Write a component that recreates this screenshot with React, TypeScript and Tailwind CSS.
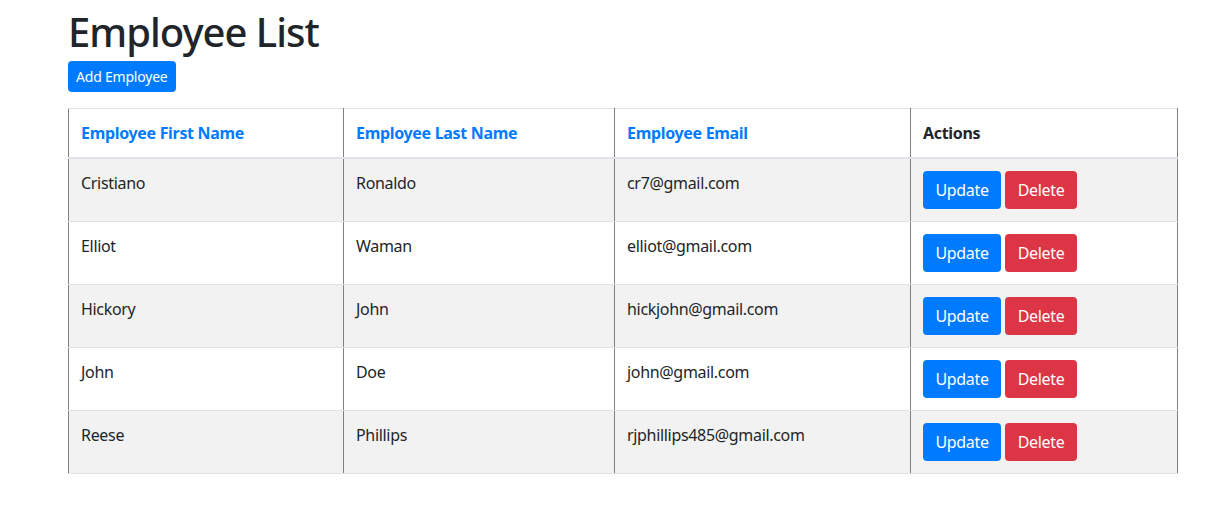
import React from 'react';

interface Employee {
  id: number;
  firstName: string;
  lastName: string;
  email: string;
}

const employees: Employee[] = [
  { id: 1, firstName: 'Cristiano', lastName: 'Ronaldo', email: 'cr7@gmail.com' },
  { id: 2, firstName: 'Elliot', lastName: 'Waman', email: 'elliot@gmail.com' },
  { id: 3, firstName: 'Hickory', lastName: 'John', email: 'hickjohn@gmail.com' },
  { id: 4, firstName: 'John', lastName: 'Doe', email: 'john@gmail.com' },
  { id: 5, firstName: 'Reese', lastName: 'Phillips', email: 'rjphillips485@gmail.com' },
];

const cell = 'px-3 pt-3 pb-3 align-top border-x border-x-[#808080] border-y border-y-[#dee2e6]';

const App: React.FC = () => {
  return (
    <div className="min-h-[522px] bg-white text-[#212529] font-['Noto_Sans','Open_Sans',sans-serif]">
      <div className="ml-[68px] w-[1110px]">
        <h1 className="pt-[8px] mb-[5px] text-[40px] leading-[48px] font-medium tracking-[-0.025em]">Employee List</h1>
        <button className="h-[31px] px-2 rounded bg-[#007bff] text-white text-[14px] leading-[21px] tracking-[-0.015em]">
          Add Employee
        </button>
        <table className="mt-4 w-full border-collapse border-b border-b-[#808080] text-[16px] leading-6 tracking-[-0.02em]">
          <thead>
            <tr>
              <th className={`${cell} w-[275px] text-left font-bold text-[#007bff] border-b-2`}>Employee First Name</th>
              <th className={`${cell} w-[271px] text-left font-bold text-[#007bff] border-b-2`}>Employee Last Name</th>
              <th className={`${cell} w-[296px] text-left font-bold text-[#007bff] border-b-2`}>Employee Email</th>
              <th className={`${cell} text-left font-bold text-[#212529] border-b-2`}>Actions</th>
            </tr>
          </thead>
          <tbody>
            {employees.map((emp, i) => (
              <tr key={emp.id} className={i % 2 === 0 ? 'bg-[#f2f2f2]' : 'bg-white'}>
                <td className={cell}>{emp.firstName}</td>
                <td className={cell}>{emp.lastName}</td>
                <td className={cell}>{emp.email}</td>
                <td className={cell}>
                  <div className="flex gap-1">
                    <button className="h-[38px] w-[78px] rounded bg-[#007bff] text-white">Update</button>
                    <button className="h-[38px] w-[72px] rounded bg-[#dc3545] text-white">Delete</button>
                  </div>
                </td>
              </tr>
            ))}
          </tbody>
        </table>
      </div>
    </div>
  );
};

export default App;
